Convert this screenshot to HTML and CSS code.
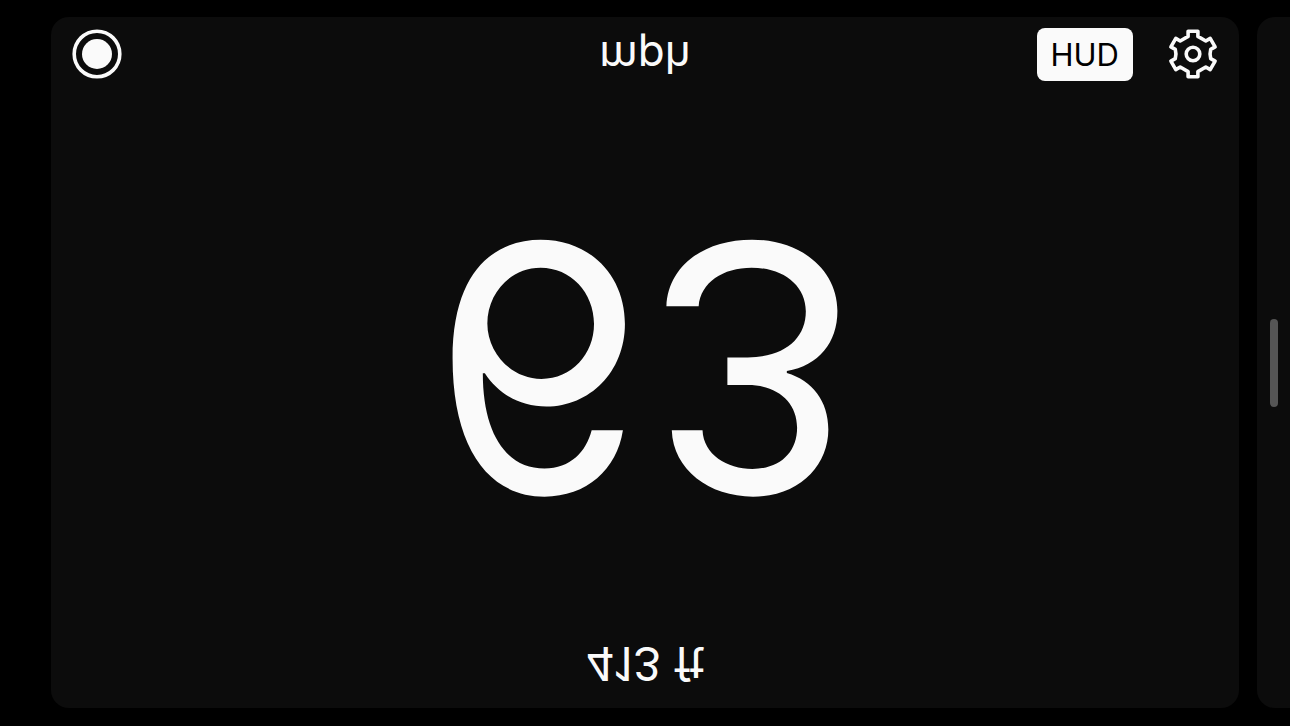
FILE: index.html
```html
<!DOCTYPE html>
<html lang="en">
<head>
<meta charset="utf-8">
<meta name="viewport" content="width=device-width, initial-scale=1">
<title>Speedometer</title>
<link rel="stylesheet" href="styles.css">
</head>
<body>
<main class="deck">
  <section class="card">
    <header class="toolbar">
      <button class="icon-button" type="button" aria-label="Record">
        <svg class="icon" viewBox="0 0 50 50" aria-hidden="true">
          <circle cx="25" cy="25" r="22.8" fill="none" stroke="currentColor" stroke-width="3.6"/>
          <circle cx="25" cy="25" r="15" fill="currentColor"/>
        </svg>
      </button>
      <p class="unit mirrored">mph</p>
      <div class="actions">
        <button class="hud-button" type="button" aria-pressed="true">HUD</button>
        <button class="icon-button" type="button" aria-label="Settings">
          <svg class="icon" viewBox="0 0 50 50" fill="none" stroke="currentColor" stroke-width="3.6" stroke-linejoin="round" aria-hidden="true">
            <path d="M20.1 2.3H29.9V7.4L37.8 12L42.2 9.4L47.1 17.9L42.7 20.4Q41.4 25 42.7 29.6L47.1 32.1L42.2 40.6L37.8 38L29.9 42.6V47.7H20.1V42.6L12.2 38L7.8 40.6L2.9 32.1L7.3 29.6Q8.6 25 7.3 20.4L2.9 17.9L7.8 9.4L12.2 12L20.1 7.4Z"/>
            <circle cx="25" cy="25" r="6.8"/>
          </svg>
        </button>
      </div>
    </header>
    <p class="speed mirrored">63</p>
    <p class="altitude mirrored">413 ft</p>
  </section>
  <section class="card card-next" aria-label="Next page"></section>
  <span class="scroll-thumb" aria-hidden="true"></span>
</main>
</body>
</html>
```
FILE: styles.css
```css
* {
  box-sizing: border-box;
}

body {
  margin: 0;
  background: #000;
  color: #fafafa;
  font-family: Inter, "Liberation Sans", sans-serif;
}

.deck {
  position: relative;
  display: grid;
  grid-template-columns: 1fr 33px;
  gap: 18px;
  min-height: 100vh;
  padding: 17px 0 18px 51px;
}

.card {
  display: flex;
  flex-direction: column;
  align-items: center;
  justify-content: space-between;
  padding: 5px 21px 16px;
  border-radius: 18px;
  background: #0c0c0c;
}

.card-next {
  border-radius: 18px 0 0 18px;
}

.toolbar {
  display: grid;
  grid-template-columns: 1fr auto 1fr;
  align-items: center;
  width: 100%;
}

.actions {
  display: flex;
  align-items: center;
  justify-content: flex-end;
  gap: 35px;
}

.icon-button {
  width: 50px;
  height: 50px;
  padding: 0;
  border: 0;
  background: none;
  color: inherit;
}

.icon {
  display: block;
  width: 50px;
  height: 50px;
}

.hud-button {
  height: 53px;
  padding: 0 14px;
  border: 0;
  border-radius: 8px;
  background: #fafafa;
  color: #000;
  font: 400 31px/53px Inter, "Liberation Sans", sans-serif;
}

/* Reads upright when reflected in the windshield. */
.mirrored {
  margin: 0;
  transform: scaleY(-1);
}

.unit {
  padding-bottom: 8px;
  font-size: 44px;
  line-height: 56px;
}

.altitude {
  font-size: 46px;
  line-height: 56px;
}

.speed {
  padding-bottom: 14px;
  font-size: 344px;
  line-height: 400px;
}

.scroll-thumb {
  position: absolute;
  top: 50%;
  right: 12px;
  width: 8px;
  height: 88px;
  border-radius: 4px;
  background: #555;
  transform: translateY(-50%);
}
```
